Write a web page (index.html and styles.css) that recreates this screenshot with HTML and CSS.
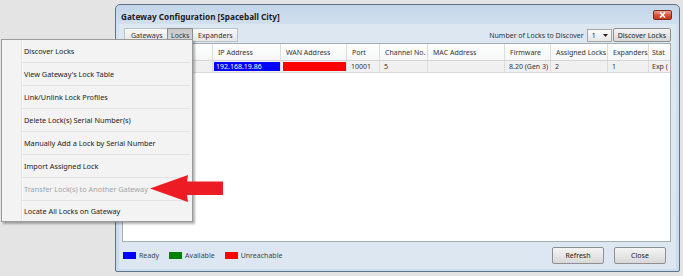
FILE: index.html
```html
<!DOCTYPE html>
<html lang="en">
<head>
    <meta charset="UTF-8">
    <title>Gateway Configuration</title>
    <link rel="stylesheet" href="styles.css">
</head>
<body>
    <div class="desktop">
        <div class="window">
            <div class="titlebar">
                <span class="title">Gateway Configuration [Spaceball City]</span>
                <span class="close-btn">
                    <svg width="7" height="6" viewBox="0 0 7 6"><path d="M1 0.5 L6 5.5 M6 0.5 L1 5.5" stroke="#fff" stroke-width="1.6"/></svg>
                </span>
            </div>
            <div class="client">
                <div class="toolbar">
                    <div class="tabs">
                        <span class="tab">Gateways</span>
                        <span class="tab active">Locks</span>
                        <span class="tab">Expanders</span>
                    </div>
                    <div class="discover">
                        <span class="discover-label">Number of Locks to Discover</span>
                        <span class="combo">1<svg width="5" height="3" viewBox="0 0 5 3"><path d="M0 0 H5 L2.5 3 Z" fill="#222"/></svg></span>
                        <span class="btn">Discover Locks</span>
                    </div>
                </div>

                <div class="grid">
                    <div class="grid-row head">
                        <span class="cell"></span>
                        <span class="cell">IP Address</span>
                        <span class="cell">WAN Address</span>
                        <span class="cell">Port</span>
                        <span class="cell">Channel No.</span>
                        <span class="cell">MAC Address</span>
                        <span class="cell">Firmware</span>
                        <span class="cell">Assigned Locks</span>
                        <span class="cell">Expanders</span>
                        <span class="cell">Stat</span>
                    </div>
                    <div class="grid-row data">
                        <span class="cell"></span>
                        <span class="cell ready">192.168.19.86</span>
                        <span class="cell unreachable"></span>
                        <span class="cell">10001</span>
                        <span class="cell">5</span>
                        <span class="cell"></span>
                        <span class="cell">8.20 (Gen 3)</span>
                        <span class="cell">2</span>
                        <span class="cell">1</span>
                        <span class="cell">Exp (</span>
                    </div>
                </div>

                <div class="footer">
                    <div class="legend">
                        <span class="swatch blue"></span><span class="legend-text">Ready</span>
                        <span class="swatch green"></span><span class="legend-text">Available</span>
                        <span class="swatch red"></span><span class="legend-text">Unreachable</span>
                    </div>
                    <div class="actions">
                        <span class="btn wide">Refresh</span>
                        <span class="btn wide">Close</span>
                    </div>
                </div>
            </div>
        </div>

        <ul class="context-menu">
            <li class="menu-item">Discover Locks</li>
            <li class="menu-item">View Gateway's Lock Table</li>
            <li class="menu-item">Link/Unlink Lock Profiles</li>
            <li class="menu-item">Delete Lock(s) Serial Number(s)</li>
            <li class="menu-item">Manually Add a Lock by Serial Number</li>
            <li class="menu-item">Import Assigned Lock</li>
            <li class="menu-item disabled">Transfer Lock(s) to Another Gateway</li>
            <li class="menu-item">Locate All Locks on Gateway</li>
        </ul>

        <svg class="arrow" width="76" height="29" viewBox="0 0 76 29">
            <path d="M2 14.5 L40 1 L39 7.5 L75 7.5 L75 21 L39 21 L40 28 Z" fill="#ed1c24"/>
        </svg>
    </div>
</body>
</html>
```

FILE: styles.css
```css
body {
    margin: 0;
    background-color: #e4e4e4;
    font-family: "Noto Sans", "Open Sans", sans-serif;
    font-size: 7px;
    color: #222;
}
.desktop {
    position: relative;
    width: 683px;
    height: 276px;
    overflow: hidden;
}

/* window */
.window {
    position: absolute;
    left: 115px;
    top: 4px;
    width: 565px;
    height: 268px;
    box-sizing: border-box;
    border: 1px solid #5d7388;
    border-radius: 5px 5px 2px 2px;
    padding: 0 3px 2px 3px;
    background: linear-gradient(#c3d5e9, #d3e1f0 22px, #cadbec);
    display: flex;
    flex-direction: column;
}
.titlebar {
    position: relative;
    height: 19px;
    display: flex;
    align-items: center;
    padding-left: 2px;
}
.title {
    font-weight: 700;
    font-size: 8.2px;
    color: #1b1b1b;
    padding-top: 3px;
}
.close-btn {
    position: absolute;
    right: 4px;
    top: 5px;
    width: 19px;
    height: 10px;
    box-sizing: border-box;
    border: 1px solid #7a2a20;
    border-radius: 2px;
    background: linear-gradient(#eba592, #d9543a 50%, #c8371c);
    display: flex;
    align-items: center;
    justify-content: center;
}
.client {
    flex: 1;
    background-color: #dde7f2;
    padding: 4px 5px 0 3px;
    display: flex;
    flex-direction: column;
}

/* toolbar */
.toolbar {
    height: 14px;
    display: flex;
    justify-content: space-between;
    align-items: stretch;
}
.tabs {
    display: flex;
    margin-left: 2px;
    border: 1px solid #b9c3cc;
    background: linear-gradient(#f8f8f8, #e6e6e6);
    width: 114px;
    box-sizing: border-box;
}
.tab {
    display: flex;
    align-items: center;
    padding: 0 5px;
    color: #333;
}
.tab:first-child { width: 42px; box-sizing: border-box; padding-left: 6px; }
.tab.active {
    background: linear-gradient(#c9c9c9, #d6d6d6);
    border: 1px solid #8d8d8d;
    margin: -1px 0;
    padding: 0 3px;
    width: 26px;
    box-sizing: border-box;
}
.discover {
    display: flex;
    align-items: stretch;
}
.discover-label {
    display: flex;
    align-items: center;
    margin-right: 3px;
    color: #333;
}
.combo {
    width: 25px;
    box-sizing: border-box;
    border: 1px solid #a5a5a5;
    background: linear-gradient(#fafafa, #e7e7e7);
    display: flex;
    align-items: center;
    justify-content: space-between;
    padding: 0 3px 0 4px;
    margin-right: 1px;
    height: 13px;
    align-self: center;
}
.btn {
    display: flex;
    align-items: center;
    justify-content: center;
    box-sizing: border-box;
    border: 1px solid #8f8f8f;
    border-radius: 2px;
    background: linear-gradient(#f4f4f4, #e6e6e6 50%, #d8d8d8);
    padding: 0 4px;
    color: #222;
}

/* grid */
.grid {
    margin-top: 1px;
    height: 199px;
    box-sizing: border-box;
    border: 1px solid #a7adb3;
    background: #fff;
    overflow: hidden;
}
.grid-row {
    display: grid;
    grid-template-columns: 90px 68px 66px 33px 48px 77px 46px 57px 41px 21px;
    width: 547px;
}
.grid-row.head {
    height: 16px;
    background: linear-gradient(#ffffff, #f5f6f7);
    border-bottom: 1px solid #d5d5d5;
}
.grid-row.data {
    height: 11px;
    background: #f0f0f0;
    border-bottom: 1px solid #dadada;
}
.cell {
    display: flex;
    align-items: center;
    padding-left: 4px;
    border-right: 1px solid #dcdcdc;
    white-space: nowrap;
    color: #333;
}
.cell:last-child {
    border-right: none;
    padding-left: 3px;
}
.head .cell { padding-left: 5px; }
.head .cell:last-child { padding-left: 3px; }
.cell.ready {
    background: #0000ff;
    color: #fff;
    margin: 1px 0 1px 1px;
    padding-left: 2px;
}
.cell.unreachable {
    background: #ff0000;
    margin: 1px 0 1px 2px;
}

/* footer */
.footer {
    flex: 1;
    display: flex;
    justify-content: space-between;
    padding-top: 5px;
}
.legend {
    display: flex;
    align-items: center;
    height: 17px;
    padding-left: 1px;
}
.swatch {
    width: 13px;
    height: 7px;
    margin-right: 3px;
}
.swatch.blue { background: #0000ff; }
.swatch.green { background: #008000; }
.swatch.red { background: #ff0000; }
.legend-text {
    margin-right: 10px;
    color: #444;
}
.actions {
    display: flex;
    gap: 10px;
    padding-right: 5px;
}
.btn.wide {
    width: 52px;
    height: 17px;
}

/* context menu */
.context-menu {
    position: absolute;
    left: 1px;
    top: 39px;
    width: 192px;
    margin: 0;
    padding: 0;
    list-style: none;
    box-sizing: border-box;
    border: 1px solid #9a9a9a;
    background: linear-gradient(90deg, #f3f3f3 19px, #e2e2e2 19px, #e2e2e2 20px, #fff 20px, #fff 21px, #f3f3f3 21px);
    box-shadow: 2px 2px 2px rgba(0, 0, 0, 0.3);
}
.menu-item {
    height: 22px;
    margin-left: 20px;
    margin-right: 2px;
    padding-left: 2px;
    display: flex;
    align-items: center;
    border-bottom: 1px solid #e2e2e2;
    color: #222;
    font-size: 7.3px;
}
.menu-item:last-child {
    border-bottom: none;
    height: 20px;
}
.menu-item.disabled {
    color: #a3a3a3;
}

.arrow {
    position: absolute;
    left: 148px;
    top: 174px;
}
```
